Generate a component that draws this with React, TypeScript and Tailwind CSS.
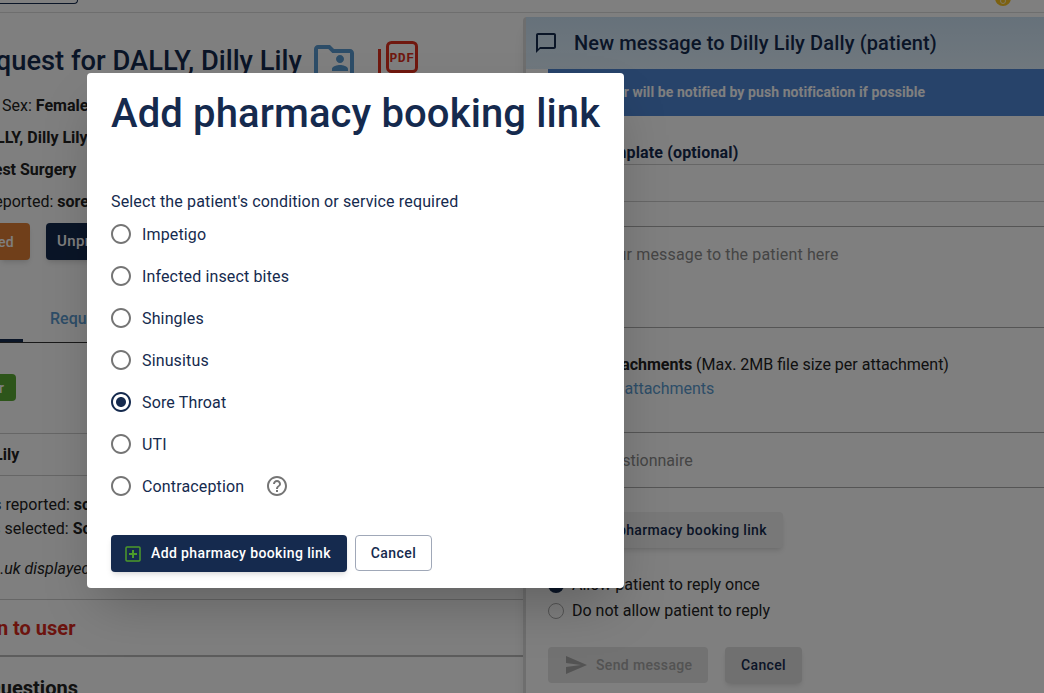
const RADIO_OFF =
  "M12 2C6.48 2 2 6.48 2 12s4.48 10 10 10 10-4.48 10-10S17.52 2 12 2zm0 18c-4.42 0-8-3.58-8-8s3.58-8 8-8 8 3.58 8 8-3.58 8-8 8z";
const RADIO_DOT = "M12 7c-2.76 0-5 2.24-5 5s2.24 5 5 5 5-2.24 5-5-2.24-5-5-5z";
const HELP =
  "M11 18h2v-2h-2v2zm1-16C6.48 2 2 6.48 2 12s4.48 10 10 10 10-4.48 10-10S17.52 2 12 2zm0 18c-4.41 0-8-3.59-8-8s3.59-8 8-8 8 3.59 8 8-3.59 8-8 8zm0-14c-2.21 0-4 1.79-4 4h2c0-1.1.9-2 2-2s2 .9 2 2c0 2-3 1.75-3 5h2c0-2.25 3-2.5 3-5 0-2.21-1.79-4-4-4z";
const CHAT =
  "M20 2H4c-1.1 0-2 .9-2 2v18l4-4h14c1.1 0 2-.9 2-2V4c0-1.1-.9-2-2-2zm0 14H6l-2 2V4h16v12z";
const FOLDER =
  "M20 6h-8l-2-2H4c-1.11 0-1.99.89-1.99 2L2 18c0 1.11.89 2 2 2h16c1.11 0 2-.89 2-2V8c0-1.11-.89-2-2-2zm0 12H4V6h5.17l2 2H20v10zm-5-5c1.1 0 2-.9 2-2s-.9-2-2-2-2 .9-2 2 .9 2 2 2zm-4 4h8v-1c0-1.33-2.67-2-4-2s-4 .67-4 2v1z";
const SEND = "M2.01 21 23 12 2.01 3 2 10l15 2-15 2z";

const CONDITIONS = [
  "Impetigo",
  "Infected insect bites",
  "Shingles",
  "Sinusitus",
  "Sore Throat",
  "UTI",
  "Contraception",
];

function Icon({ d, className }: { d: string; className: string }) {
  return (
    <svg viewBox="0 0 24 24" fill="currentColor" className={className}>
      <path d={d} />
    </svg>
  );
}

function PdfIcon() {
  return (
    <svg viewBox="0 0 40 40" className="h-10 w-10 shrink-0 text-[#e0301e]">
      <rect x="0" y="8" width="3" height="32" fill="currentColor" />
      <rect x="9.5" y="1.5" width="29" height="29" rx="4" fill="none" stroke="currentColor" strokeWidth="3" />
      <text x="24" y="21" textAnchor="middle" fontSize="13" fontWeight="700" letterSpacing="0.5" fill="currentColor" fontFamily="'Liberation Mono', monospace">
        PDF
      </text>
    </svg>
  );
}

function PlusBox() {
  return (
    <svg viewBox="0 0 16 16" className="h-4 w-4 shrink-0 text-[#4c9a2a]" fill="none" stroke="currentColor">
      <rect x="1" y="1" width="14" height="14" rx="1" strokeWidth="1.5" />
      <path d="M8 4v8M4 8h8" strokeWidth="2" />
    </svg>
  );
}

function LeftColumn() {
  return (
    <div className="w-[523px] shrink-0 overflow-hidden whitespace-nowrap text-base text-[#222]">
      <div className="mt-6 flex h-12 items-center">
        <h1 className="-ml-[36px] w-[350px] shrink-0 text-[27.3px] font-medium text-[#152a4e]">Request for DALLY, Dilly Lily</h1>
        <Icon d={FOLDER} className="h-12 w-12 shrink-0 -ml-[4px] text-[#5b9bd0]" />
        <div className="ml-5 self-start pt-1">
          <PdfIcon />
        </div>
      </div>
      <div className="mt-1 flex h-8 items-center pl-[2px] pt-[2px]">
        Sex:&nbsp;<b className="font-bold">Female</b>
      </div>
      <div className="-ml-[25px] flex h-8 items-center pt-[2px] font-bold">DALLY, Dilly Lily</div>
      <div className="-ml-[20px] flex h-8 items-center pt-[2px] font-bold">West Surgery</div>
      <div className="-ml-[11px] flex h-8 items-center pt-[2px]">
        reported:&nbsp;<b className="font-bold">sore throat</b>
      </div>
      <div className="mt-1.5 flex h-[37px] items-stretch gap-4">
        <div className="flex w-[30px] items-center justify-end rounded-r bg-[#e07f35] pr-4 text-sm font-medium tracking-wide text-white shadow-md">
          ed
        </div>
        <div className="flex w-[120px] items-center rounded bg-[#152a4e] pl-[11px] text-[15px] font-medium tracking-wide text-white shadow-md">
          Unprocess
        </div>
      </div>
      <div className="relative mt-9 flex h-[47px] items-center border-b border-[#333] pl-[50px]">
        <span className="font-medium text-[#5b9bd0]">Request</span>
        <div className="absolute bottom-0 left-0 h-[3px] w-[23px] bg-[#152a4e]" />
      </div>
      <div className="mt-[31px] flex h-[27px] w-[16px] items-center justify-end rounded-r bg-[#5aab35] pr-3 text-sm font-medium text-white">
        r
      </div>
      <div className="mt-8 flex h-[43px] items-center border-y border-[#ccc] pt-[1px] font-bold">
        <span className="-ml-[6px]">Lily</span>
      </div>
      <div className="mt-[17px] flex h-6 items-center">
        <span className="-ml-[75px]">Symptoms reported:&nbsp;<b>sore</b></span>
      </div>
      <div className="flex h-6 items-center">
        <span className="-ml-[76px]">Symptoms selected:&nbsp;<b>Sore</b></span>
      </div>
      <div className="mt-[15px] flex h-6 items-center pt-[2px] italic">
        <span className="-ml-[25px]">nhs.uk displayed</span>
      </div>
      <div className="mt-[19px] border-t border-[#ccc]" />
      <div className="flex h-[55px] items-center text-xl font-bold text-[#d9291c]">
        <span className="-ml-[52px]">Return to user</span>
      </div>
      <div className="border-t-2 border-[#bbb]" />
      <div className="-ml-[13px] mt-[17px] text-xl font-bold">Questions</div>
    </div>
  );
}

function RightPanel() {
  return (
    <div className="mt-1 flex-1 rounded-t border-l-[3px] border-[#ddd] text-base text-[#222] shadow-lg whitespace-nowrap">
      <div className="flex h-[52px] items-center bg-gradient-to-b from-[#cde3f5] to-[#e0f0fc] pl-2">
        <Icon d={CHAT} className="h-6 w-6 shrink-0 text-[#152a4e]" />
        <h2 className="ml-4 text-xl font-medium tracking-[0.125px] text-[#152a4e]">New message to Dilly Lily Dally (patient)</h2>
      </div>
      <div className="ml-[22px] flex h-[47px] items-center bg-[#4f86d4] pb-[2px] pl-[25px] text-sm font-bold tracking-[0.08px] text-white">
        The user will be notified by push notification if possible
      </div>
      <div className="pl-[22px]">
        <div className="mt-[25px] flex h-[23px] items-center font-bold tracking-[0.15px] text-[#152a4e]">Select template (optional)</div>
        <div className="h-[38px] border-y border-[#ccc]" />
        <div className="mt-6 flex h-[102px] items-start border-y border-[#aaa] pl-[14px] pt-4 tracking-[0.15px] text-[#8a8a8a]">
          Type your message to the patient here
        </div>
        <div className="mt-6 flex h-6 items-center pl-[21px] pt-[2px]">
          <b className="font-bold">Add attachments</b>&nbsp;(Max. 2MB file size per attachment)
        </div>
        <div className="pl-[44px] pt-[1px] text-[#5b9bd0]">Add attachments</div>
        <div className="mt-[31px] flex h-[56px] items-center border-y border-[#aaa] pt-[2px] text-[#8a8a8a]">
          <span className="-ml-[8px]">Include questionnaire</span>
        </div>
        <div className="mt-6 flex h-9 w-[235px] items-center rounded bg-[#f0f0f0] pl-10 text-sm font-medium tracking-wide text-[#152a4e] shadow-md">
          Add pharmacy booking link
        </div>
        <div className="mt-6 flex h-[26px] items-center gap-2">
          <span className="h-4 w-4 rounded-full bg-[#152a4e]" />
          Allow patient to reply once
        </div>
        <div className="flex h-[26px] items-center gap-2">
          <span className="h-4 w-4 rounded-full border border-[#aaa]" />
          Do not allow patient to reply
        </div>
        <div className="mt-[23px] flex gap-[17px]">
          <div className="flex h-9 w-[160px] items-center gap-2 rounded bg-[#e4e4e4] pl-4 text-sm font-medium tracking-wide text-[#a6a6a6]">
            <Icon d={SEND} className="h-6 w-6 shrink-0" />
            Send message
          </div>
          <div className="flex h-9 w-[77px] items-center justify-center rounded bg-[#e0e0e0] text-sm font-medium tracking-wide text-[#152a4e] shadow-md">
            Cancel
          </div>
        </div>
      </div>
    </div>
  );
}

function Modal() {
  return (
    <div className="absolute left-[87px] top-[73px] h-[515px] w-[537px] rounded bg-white px-6 pt-4 text-[#152a4e] shadow-2xl">
      <h1 className="flex h-12 items-center whitespace-nowrap pt-[2px] text-[40px] font-medium tracking-[0.125px]">Add pharmacy booking link</h1>
      <p className="mt-[52px] flex h-6 items-center pt-[1px] text-base tracking-[0.009em]">
        Select the patient's condition or service required
      </p>
      <div>
        {CONDITIONS.map((label) => {
          const checked = label === "Sore Throat";
          return (
            <div key={label} className="flex h-[42px] items-center">
              <span className="relative -ml-0.5 h-6 w-6 shrink-0">
                <Icon d={RADIO_OFF} className={`h-6 w-6 ${checked ? "text-[#152a4e]" : "text-[#757575]"}`} />
                {checked && <Icon d={RADIO_DOT} className="absolute inset-0 h-6 w-6 text-[#152a4e]" />}
              </span>
              <span className="ml-[9px] pt-[2px] text-base tracking-[0.009em]">{label}</span>
              {label === "Contraception" && (
                <Icon d={HELP} className="ml-[21px] h-6 w-6 text-[#757575]" />
              )}
            </div>
          );
        })}
      </div>
      <div className="mt-7 flex items-start gap-2">
        <div className="flex h-[37px] w-[236px] items-center rounded bg-[#152a4e] pl-[14px] text-sm font-medium tracking-[0.028em] text-white shadow-md">
          <PlusBox />
          <span className="ml-[10px] pb-[1px]">Add pharmacy booking link</span>
        </div>
        <div className="flex h-9 w-[77px] items-center justify-center rounded border border-[#a0a8b8] text-sm font-medium tracking-[0.03em]">
          Cancel
        </div>
      </div>
    </div>
  );
}

export default function App() {
  return (
    <div className="relative h-[693px] overflow-hidden bg-white font-['Roboto',sans-serif]">
      <div className="flex h-[13px] justify-between border-b border-[#ddd]">
        <div className="h-[4px] w-[78px] rounded-br border-b border-r border-[#152a4e]" />
        <div className="-mt-[10px] mr-[33px] flex h-4 w-4 items-end justify-center rounded-full bg-[#f9c323]">
          <span className="mb-[2px] h-[6px] w-[6px] rounded-full border border-[#fff3c4]" />
        </div>
      </div>
      <div className="flex">
        <LeftColumn />
        <RightPanel />
      </div>
      <div className="absolute inset-0 bg-black/50">
        <Modal />
      </div>
    </div>
  );
}
